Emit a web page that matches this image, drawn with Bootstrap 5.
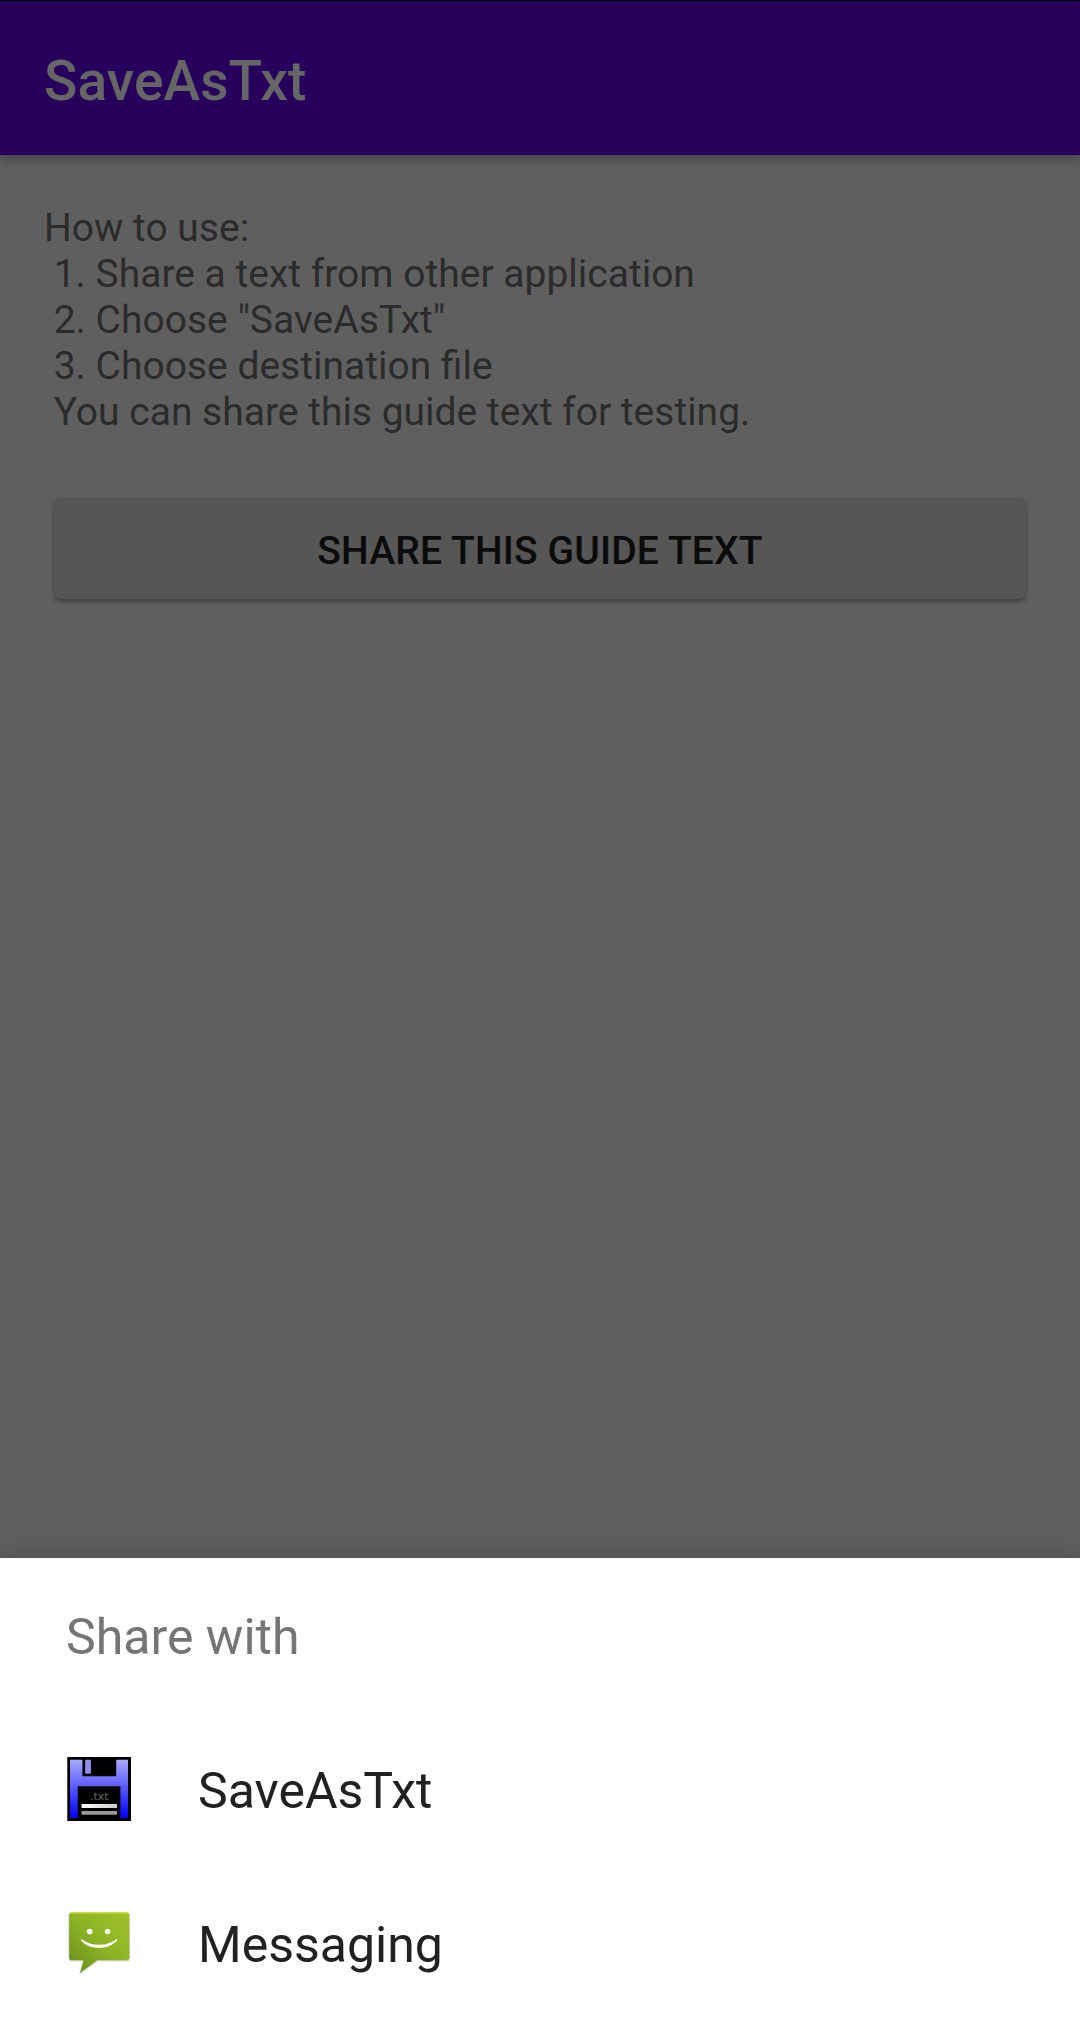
<!DOCTYPE html>
<html lang="en">
<head>
<meta charset="utf-8">
<meta name="viewport" content="width=device-width, initial-scale=1">
<title>SaveAsTxt</title>
<link href="https://cdn.jsdelivr.net/npm/bootstrap@5.3.0/dist/css/bootstrap.min.css" rel="stylesheet">
<style>
  body { font-family: Roboto, "Liberation Sans", sans-serif; background: #5f5f5f; height: 2020px; overflow: hidden; }
  .app-bar { height: 155px; background: #27005e; border-top: 1px solid #000; padding: 6px 44px 0; box-shadow: 0 4px 10px rgba(0,0,0,.3); }
  .app-title { font-size: 55px; font-weight: 500; line-height: 66px; letter-spacing: .15px; color: #666; }
  .guide { padding: 50px 44px 0; font-size: 39px; line-height: 46px; color: #2b2b2b; white-space: pre; }
  .share-btn, .share-btn:hover { height: 101px; margin: 63px 54px 0; padding: 5px 0 0; border: 0; border-radius: 7px; background: #565656; color: #0b0b0b; font-size: 39px; font-weight: 500; line-height: 46px; letter-spacing: .15px; box-shadow: 0 3px 4px rgba(0,0,0,.28), 0 1px 2px rgba(0,0,0,.08); }
  .sheet { height: 462px; box-shadow: 0 0 20px rgba(0,0,0,.2); font-size: 50px; line-height: 58px; color: #212121; }
  .sheet-title, .target { height: 154px; padding: 0 66px; }
  .sheet-title { color: #757575; padding-top: 4px; }
  .target { gap: 66px; border: 0; color: inherit; background: #fff; }
  .target svg { width: 66px; height: 66px; flex: none; }
  .target span { padding-top: 4px; }
</style>
</head>
<body class="d-flex flex-column">
  <header class="app-bar navbar flex-shrink-0">
    <h1 class="app-title m-0">SaveAsTxt</h1>
  </header>
  <main class="d-flex flex-column flex-grow-1">
    <div class="guide">How to use:
 1. Share a text from other application
 2. Choose "SaveAsTxt"
 3. Choose destination file
 You can share this guide text for testing.</div>
    <button type="button" class="btn share-btn text-uppercase">Share this guide text</button>
  </main>
  <section class="sheet bg-white flex-shrink-0" aria-label="Share with">
    <div class="sheet-title d-flex align-items-center">Share with</div>
    <div class="list-group list-group-flush">
      <a class="target list-group-item d-flex align-items-center">
        <svg viewBox="66 1756 66 66" aria-hidden="true">
          <defs>
            <linearGradient id="disk" x1="0" y1="0" x2="0" y2="1"><stop offset="0" stop-color="#aaf"/><stop offset="1" stop-color="#00f"/></linearGradient>
            <linearGradient id="line" x1="0" y1="0" x2="1" y2="0"><stop offset="0" stop-color="#fff"/><stop offset="1" stop-color="#ccc"/></linearGradient>
          </defs>
          <path fill="#000" d="M67.3 1757h63.7v64H67.3z"/>
          <path fill="url(#disk)" d="M70 1759.7h12.4v16.6h33.8v-16.6h11.8v58.3h-7.6v-31.7H77.7V1818H70z"/>
          <path fill="#8c8cfb" stroke="#b7b7ff" stroke-width=".6" d="M85.6 1760.2h5v13h-5z"/>
          <text x="90" y="1799.5" font-size="11" fill="#666" font-family="DejaVu Sans" textLength="18.5">.txt</text>
          <path fill="url(#line)" d="M81.6 1804h35.4v4H81.6z"/>
          <path fill="#999" d="M81.6 1811h35.4v3.7H81.6z"/>
        </svg>
        <span>SaveAsTxt</span>
      </a>
      <a class="target list-group-item d-flex align-items-center">
        <svg viewBox="66 1910 66 66" aria-hidden="true">
          <defs>
            <linearGradient id="bubble" x1="1" y1="0" x2="0" y2="1"><stop offset="0" stop-color="#9fc22c"/><stop offset=".5" stop-color="#8db325"/><stop offset="1" stop-color="#688b1b"/></linearGradient>
          </defs>
          <path fill="#999" opacity=".45" d="M71.5 1912.5h55.500q3 0 3 3v42.700q0 3-3 3H98L79 1974.500l4.200-13.300H71.500q-3 0-3-3v-42.700q0-3 3-3z"/>
          <path fill="url(#bubble)" d="M72 1912.400h54.500q2.800 0 2.800 2.800v42.300q0 2.800-2.800 2.800H97.200L80 1973l3.600-12.700H72q-2.800 0-2.800-2.800v-42.300q0-2.800 2.800-2.800z"/>
          <path fill="#c6e52c" d="M72 1912.300h54.500q2.200 0 2.700 1.800-1-.6-2.700-.6H72q-1.700 0-2.700.6.500-1.800 2.700-1.800z"/>
          <circle cx="89.700" cy="1931.500" r="2.800" fill="#fff"/>
          <circle cx="107.600" cy="1931.500" r="2.800" fill="#fff"/>
          <path fill="#fff" d="M81 1938.700q7.500 6 18 6t18-6q.5 1.500-1 3-7 6.200-17 6.200t-17-6.200q-1.500-1.500-1-3z"/>
        </svg>
        <span>Messaging</span>
      </a>
    </div>
  </section>
<script src="https://cdn.jsdelivr.net/npm/bootstrap@5.3.0/dist/js/bootstrap.bundle.min.js"></script>
</body>
</html>
